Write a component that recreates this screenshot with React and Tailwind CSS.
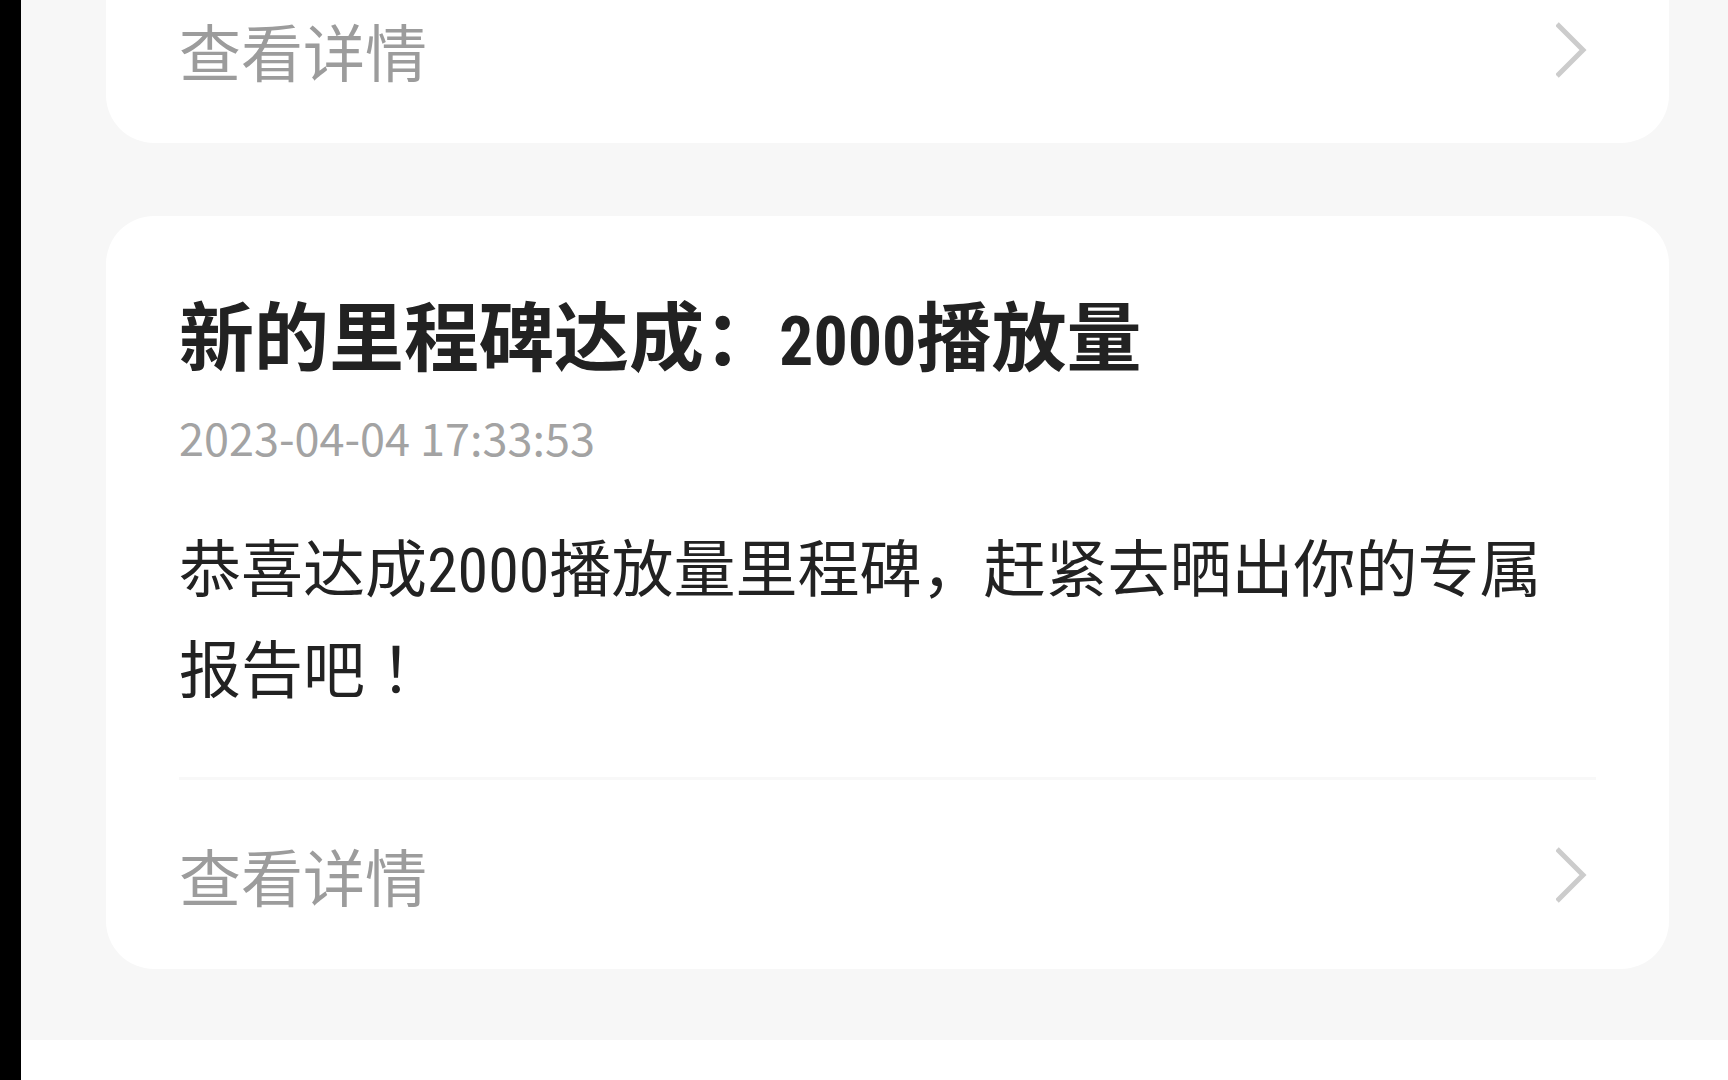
import React from 'react';

const MESSAGES = [
  {
    id: 1,
    title: '新的里程碑达成：2000播放量',
    time: '2023-04-04 17:33:53',
    text: '恭喜达成2000播放量里程碑，赶紧去晒出你的专属报告吧！',
  },
];

const ChevronIcon = () => (
  <svg className="w-10 h-16" viewBox="0 0 40 64" fill="none" stroke="#cccccc" strokeWidth="5" aria-hidden="true">
    <path d="M1 6 L27 32 L1 58" />
  </svg>
);

// Цифры набираем узким шрифтом, восклицательный знак - по центру клетки
const MixedText = ({ text, digitClass }) =>
  text.split(/(\d+|！)/).map((part, i) => {
    if (/^\d+$/.test(part)) {
      return (
        <span key={i} className={`leading-none font-['Roboto_Condensed','Noto_Sans_CJK_SC',sans-serif] ${digitClass}`}>
          {part}
        </span>
      );
    }
    if (part === '！') {
      return <span key={i} lang="ja" className="leading-none font-['Noto_Sans_CJK_JP',sans-serif]">{part}</span>;
    }
    return part;
  });

const DetailLink = () => (
  <a href="#detail" className="flex items-center justify-between h-[100px] text-[62px] leading-[100px] text-[#9c9c9c]">
    <span>查看详情</span>
    <ChevronIcon />
  </a>
);

const MessageCard = ({ message }) => (
  <article className="bg-white rounded-[48px] px-[73px] pt-[67px] pb-[44px]">
    <h2 className="text-[75px] leading-[100px] font-bold text-[#222222]">
      <MixedText text={message.title} digitClass="text-[68px]" />
    </h2>
    <time className="block mt-[22px] text-[45px] leading-[64px] text-[#a3a3a3]">{message.time}</time>
    <p className="mt-[46px] text-[62px] leading-[101px] text-[#222222]">
      <MixedText text={message.text} digitClass="text-[62px]" />
    </p>
    <hr className="mt-[60px] mb-[45px] border-0 h-[3px] bg-[#f8f8f8]" />
    <DetailLink />
  </article>
);

const App = () => {
  return (
    <div className="min-h-screen flex bg-white font-['Noto_Sans_CJK_SC',sans-serif]">
      <div className="w-[21px] shrink-0 bg-black" />
      <main className="flex-1">
        <div className="flex flex-col gap-[73px] bg-[#f7f7f7] pl-[85px] pr-[59px] pb-[71px]">
          {/* конец предыдущего сообщения */}
          <article className="bg-white rounded-b-[48px] px-[73px] pb-[43px]">
            <DetailLink />
          </article>
          {MESSAGES.map(message => (
            <MessageCard key={message.id} message={message} />
          ))}
        </div>
      </main>
    </div>
  );
};

export default App;
